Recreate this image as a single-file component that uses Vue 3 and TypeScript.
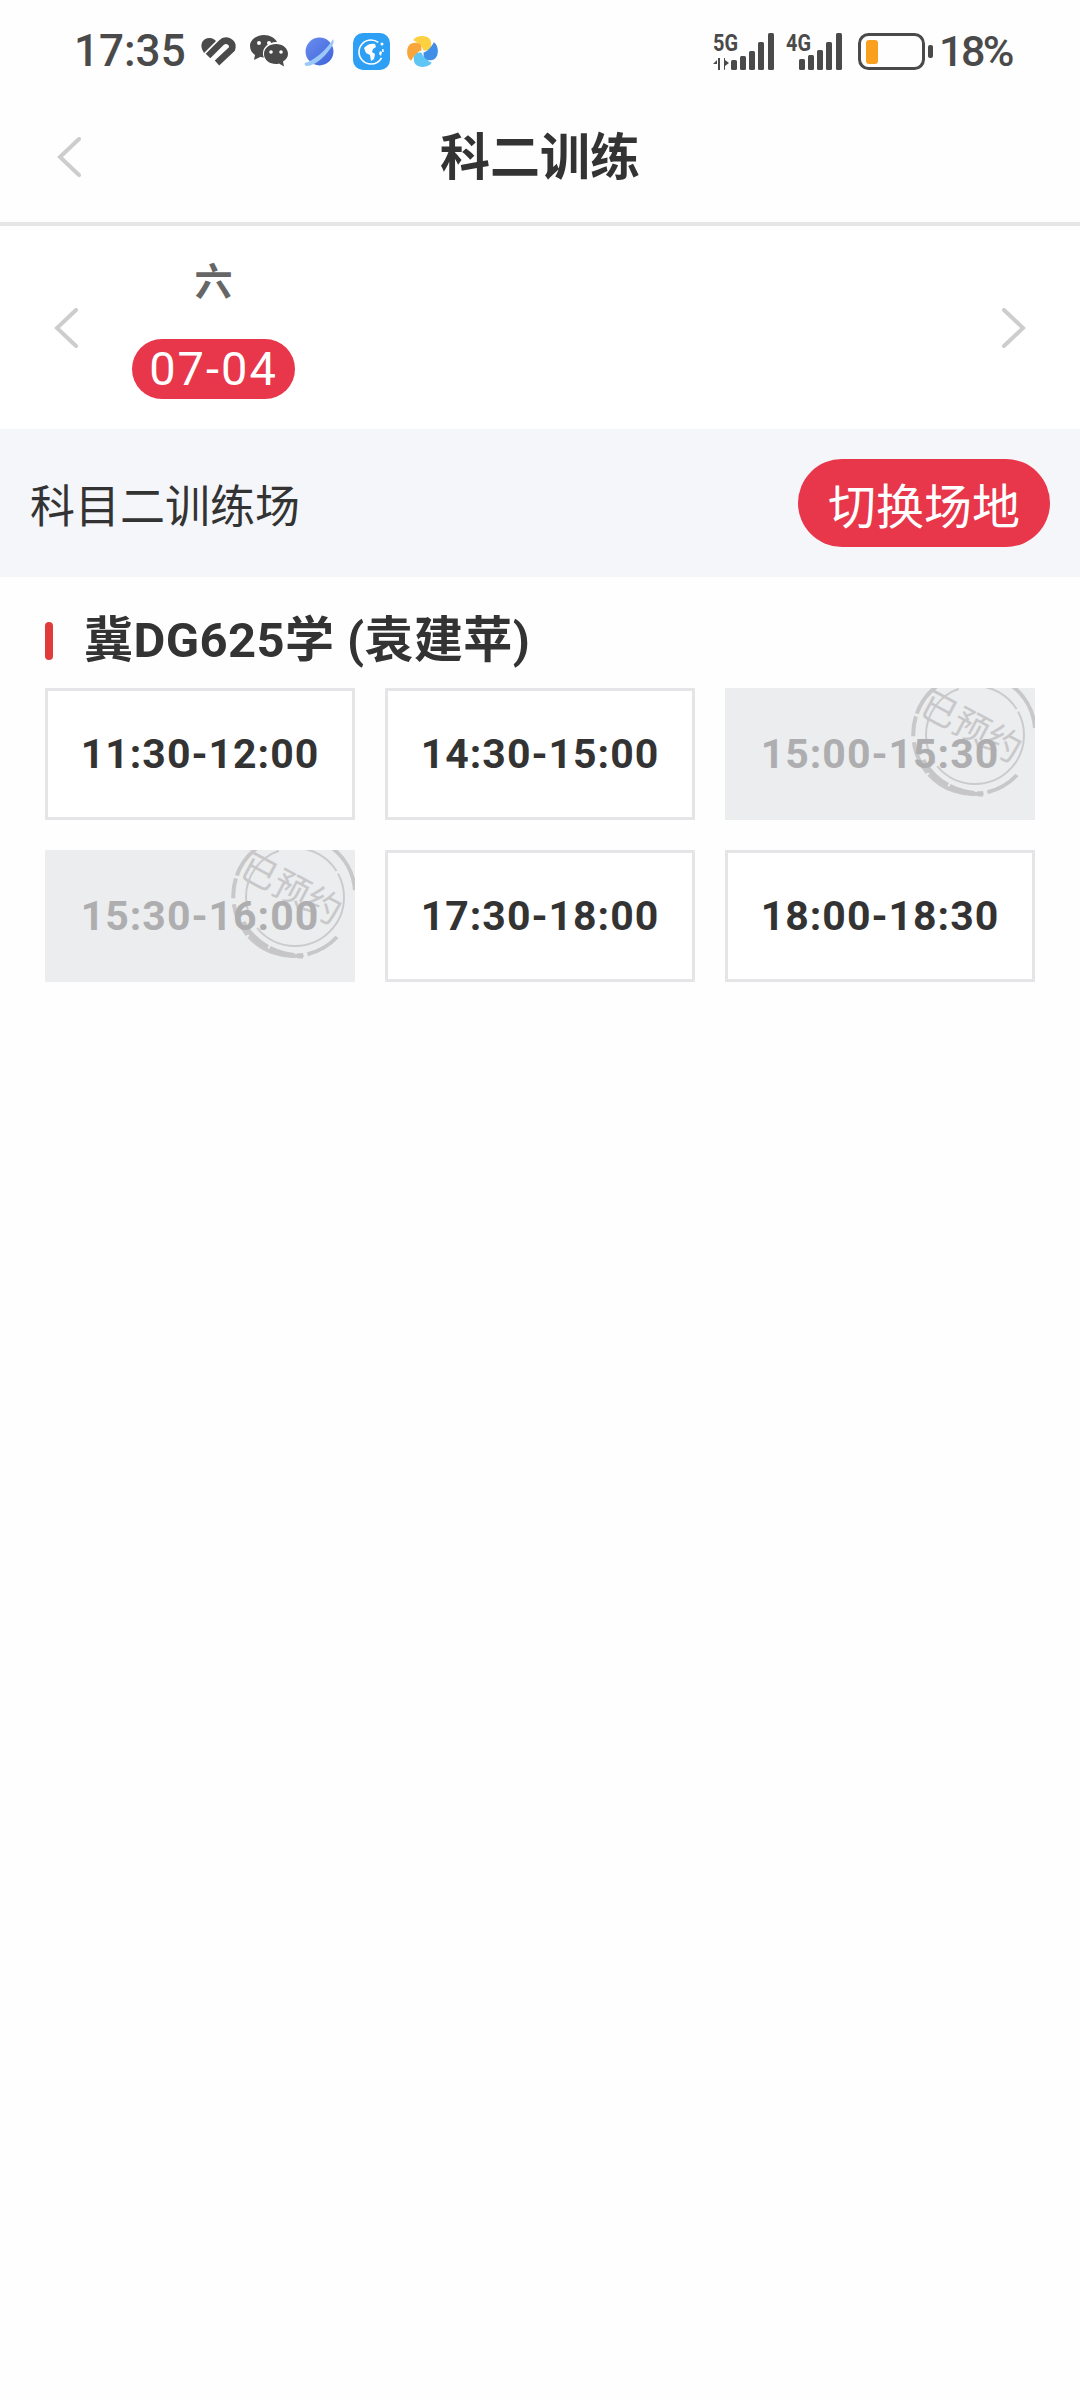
<script setup lang="ts">
interface Slot {
  time: string
  booked: boolean
}

const slots: Slot[] = [
  { time: '11:30-12:00', booked: false },
  { time: '14:30-15:00', booked: false },
  { time: '15:00-15:30', booked: true },
  { time: '15:30-16:00', booked: true },
  { time: '17:30-18:00', booked: false },
  { time: '18:00-18:30', booked: false },
]

const bladeAngles = [
  { angle: 0, color: '#fcd03f' },
  { angle: 90, color: '#3f8fe8' },
  { angle: 180, color: '#5ec5f4' },
  { angle: 270, color: '#f8a53c' },
]
</script>

<template>
  <div class="page">
    <div class="status-bar">
      <div class="status-left">
        <span class="clock">17:35</span>
        <svg class="ic-heart" viewBox="0 0 36 30">
          <path d="M3 15C-1 9 3 1 10 2c2 0 4 1 6 3L4 17z" fill="#4a4a4a" />
          <path d="M8 20L21 7c5-5 13-1 11 6L17 27" fill="none" stroke="#4a4a4a" stroke-width="6.500" />
        </svg>
        <svg class="ic-wechat" viewBox="0 0 38 32">
          <path d="M14 0C6 0 0 5 0 11c0 4 2 7 5 9l-1 5 6-3c1 0 3 .5 4 .5C13 21 13 20 13 18c0-6 6-11 13-11h1C25 3 20 0 14 0z" fill="#4a4a4a" />
          <path d="M26 9c-6.500 0-12 4-12 10s5.500 10 12 10c1 0 2 0 3-.5l5 3-1-5c3-2 5-4.500 5-7.500 0-6-5.500-10-12-10z" fill="#4a4a4a" />
          <circle cx="9" cy="8" r="2" fill="#fff" />
          <circle cx="19" cy="8" r="2" fill="#fff" />
          <circle cx="21" cy="17" r="1.800" fill="#fff" />
          <circle cx="31" cy="17" r="1.800" fill="#fff" />
        </svg>
        <svg class="ic-planet" viewBox="0 0 30 30">
          <defs>
            <linearGradient id="planetFill" x1="0" y1="0" x2="1" y2="1">
              <stop offset="0" stop-color="#6a8df0" />
              <stop offset="1" stop-color="#3f63d8" />
            </linearGradient>
          </defs>
          <circle cx="15" cy="15" r="13.500" fill="url(#planetFill)" />
          <path d="M1 26C8 25 22 14 28 3c1 2 1 3 0 5C23 18 11 29 3 29c-2 0-3-1-2-3z" fill="#9cc8f8" />
        </svg>
        <svg class="ic-globe" viewBox="0 0 37 37">
          <rect width="37" height="37" rx="10" fill="#2d9ff5" />
          <circle cx="18" cy="19" r="12" fill="none" stroke="#fff" stroke-width="1.600" stroke-dasharray="58 8" stroke-dashoffset="-6" />
          <path d="M11 15c3-4 8-5 11-4l1 3-3 2-1 3 3 2-1 5-3 2-1-6-4-2z" fill="#fff" />
          <circle cx="29" cy="11" r="1.500" fill="#fff" />
          <path d="M27 18l2 1-1 4-2-2z" fill="#fff" />
        </svg>
        <svg class="ic-wheel" viewBox="0 0 30 30">
          <path
            v-for="blade in bladeAngles"
            :key="blade.angle"
            d="M6 4C9-1 19-1 22 3c2 3 2 7 0 10-2 1-4 1-6 1C15 10 10 6 6 4z"
            :fill="blade.color"
            :transform="`rotate(${blade.angle} 15 15)`"
          />
        </svg>
      </div>
      <div class="status-right">
        <svg class="ic-signal" viewBox="0 0 63 37">
          <text x="1" y="18" class="net-label" textLength="25" lengthAdjust="spacingAndGlyphs">5G</text>
          <path d="M5 27l-4 4h4zM6 37h2V25H6zM12 25v12l1-.5V33l4-3-4-3v-2z" fill="#4a4a4a" />
          <rect x="19" y="27" width="6" height="10" rx="1.500" fill="#4a4a4a" />
          <rect x="28" y="23" width="6" height="14" rx="1.500" fill="#4a4a4a" />
          <rect x="37" y="18" width="6" height="19" rx="1.500" fill="#4a4a4a" />
          <rect x="46" y="9" width="6" height="28" rx="1.500" fill="#4a4a4a" />
          <rect x="56" y="0" width="6" height="37" rx="1.500" fill="#4a4a4a" />
        </svg>
        <svg class="ic-signal-4g" viewBox="0 0 56 37">
          <text x="0" y="18" class="net-label" textLength="25" lengthAdjust="spacingAndGlyphs">4G</text>
          <rect x="13" y="26" width="6" height="11" rx="1.500" fill="#4a4a4a" />
          <rect x="22" y="22" width="6" height="15" rx="1.500" fill="#4a4a4a" />
          <rect x="31" y="17" width="6" height="20" rx="1.500" fill="#4a4a4a" />
          <rect x="40" y="9" width="6" height="28" rx="1.500" fill="#4a4a4a" />
          <rect x="50" y="0" width="6" height="37" rx="1.500" fill="#4a4a4a" />
        </svg>
        <svg class="ic-battery" viewBox="0 0 76 37">
          <rect x="1.500" y="1.500" width="64" height="34" rx="9" fill="none" stroke="#4a4a4a" stroke-width="3" />
          <rect x="8" y="7" width="12" height="24" rx="3" fill="#f9a01e" />
          <rect x="70" y="12" width="5" height="13" rx="2" fill="#4a4a4a" />
        </svg>
        <span class="percent">18%</span>
      </div>
    </div>

    <header class="nav">
      <svg class="chevron" viewBox="0 0 24 40">
        <path d="M22 2L3 20l19 18" />
      </svg>
      <h1 class="nav-title">科二训练</h1>
    </header>

    <div class="date-row">
      <svg class="chevron" viewBox="0 0 24 40">
        <path d="M22 2L3 20l19 18" />
      </svg>
      <div class="days">
        <div class="day">
          <span class="day-name">六</span>
          <span class="day-date">07-04</span>
        </div>
      </div>
      <svg class="chevron" viewBox="0 0 24 40">
        <path d="M2 2l19 18L2 38" />
      </svg>
    </div>

    <div class="field-bar">
      <span class="field-name">科目二训练场</span>
      <button type="button" class="field-switch">切换场地</button>
    </div>

    <section class="coach">
      <h2 class="coach-title">冀DG625学 (袁建苹)</h2>
      <div class="slot-grid">
        <div
          v-for="slot in slots"
          :key="slot.time"
          class="slot"
          :class="{ 'slot--booked': slot.booked }"
        >
          <template v-if="slot.booked">
            <svg class="stamp" viewBox="0 0 124 132">
              <circle cx="64" cy="47" r="49" fill="none" stroke="#cbcbcd" stroke-width="2" stroke-dasharray="120 4 90 6 60 3" />
              <path d="M34 -7A60 60 0 1 0 106 87" fill="none" stroke="#c8c8ca" stroke-width="4" stroke-dasharray="44 3 20 6 34 2 60 4" />
              <path d="M12 72c10 20 32 34 60 34" fill="none" stroke="#c6c6c8" stroke-width="5" stroke-dasharray="36 2 26 3" />
              <path d="M100 -3A60 60 0 0 1 124 40" fill="none" stroke="#c8c8ca" stroke-width="4" />
            </svg>
            <span class="stamp-text">已预约</span>
          </template>
          <span class="slot-time">{{ slot.time }}</span>
        </div>
      </div>
    </section>
  </div>
</template>

<style scoped>
.page {
  min-height: 2400px;
  background: #fefefe;
  color: #333;
  font-family: Roboto, "Noto Sans CJK SC", sans-serif;
}

.status-bar {
  height: 38px;
  padding: 32px 68px 22px 74px;
  display: flex;
  align-items: center;
  justify-content: space-between;
  color: #4a4a4a;
}

.status-left,
.status-right {
  display: flex;
  align-items: center;
}

.clock {
  width: 126px;
  font-size: 44px;
  font-weight: 500;
  line-height: 38px;
}

.ic-heart {
  width: 36px;
  height: 30px;
  margin-right: 14px;
}

.ic-wechat {
  width: 38px;
  height: 32px;
  margin-right: 16px;
}

.ic-planet {
  width: 31px;
  height: 31px;
  margin-right: 18px;
}

.ic-globe {
  width: 37px;
  height: 37px;
  margin-right: 17px;
}

.ic-wheel {
  width: 31px;
  height: 31px;
}

.ic-signal {
  width: 63px;
  height: 37px;
  margin-right: 11px;
  overflow: visible;
}

.ic-signal-4g {
  width: 56px;
  height: 37px;
  margin-right: 16px;
  overflow: visible;
}

.ic-battery {
  width: 76px;
  height: 37px;
  margin-right: 5px;
}

.net-label {
  font-family: Roboto, sans-serif;
  font-size: 24px;
  font-weight: 700;
  fill: #4a4a4a;
}

.percent {
  font-size: 43px;
  font-weight: 500;
  letter-spacing: -2.5px;
  line-height: 38px;
}

.nav {
  height: 130px;
  padding-left: 57px;
  display: flex;
  align-items: center;
  border-bottom: 4px solid #e6e6e8;
}

.chevron {
  width: 24px;
  height: 40px;
  flex: 0 0 auto;
  fill: none;
  stroke: #cdcdcd;
  stroke-width: 4;
  stroke-linecap: round;
}

.nav-title {
  flex: 1;
  margin: 2px 81px 0 0;
  text-align: center;
  font-size: 50px;
  font-weight: 700;
  line-height: 60px;
  color: #333;
}

.date-row {
  height: 203px;
  padding: 0 54px;
  display: flex;
  align-items: center;
  background: #fff;
}

.days {
  flex: 1;
  padding-left: 54px;
}

.day {
  width: 163px;
  display: flex;
  flex-direction: column;
  align-items: center;
  gap: 40px;
  padding-top: 8px;
}

.day-name {
  font-size: 38px;
  font-weight: 700;
  line-height: 34px;
  color: #666;
}

.day-date {
  width: 163px;
  height: 60px;
  border-radius: 30px;
  background: #e8364a;
  color: #fff;
  font-size: 47px;
  letter-spacing: 2px;
  line-height: 60px;
  text-align: center;
}

.field-bar {
  height: 148px;
  padding: 0 30px;
  display: flex;
  align-items: center;
  justify-content: space-between;
  background: #f5f6fa;
}

.field-name {
  font-size: 45px;
  color: #333;
}

.field-switch {
  width: 252px;
  height: 88px;
  padding: 0;
  border: 0;
  border-radius: 44px;
  background: #e8364a;
  color: #fff;
  font-family: inherit;
  font-size: 48px;
}

.coach {
  padding: 36px 45px 0;
}

.coach-title {
  position: relative;
  margin: 0 0 19px;
  padding-left: 39px;
  font-size: 49px;
  font-weight: 700;
  letter-spacing: 0.4px;
  line-height: 56px;
  color: #333;
}

.coach-title::before {
  content: "";
  position: absolute;
  left: 0;
  top: 9px;
  width: 8px;
  height: 38px;
  border-radius: 4px;
  background: #e03a3a;
}

.slot-grid {
  display: grid;
  grid-template-columns: repeat(3, 310px);
  grid-auto-rows: 132px;
  gap: 30px;
}

.slot {
  position: relative;
  display: flex;
  align-items: center;
  justify-content: center;
  box-sizing: border-box;
  border: 3px solid #e5e5e7;
  background: #fff;
}

.slot-time {
  position: relative;
  font-size: 41px;
  font-weight: 700;
  letter-spacing: 1px;
  color: #333;
}

.slot--booked {
  border: 0;
  background: #ecedef;
}

.slot--booked .slot-time {
  color: #aeaeb0;
}

.stamp {
  position: absolute;
  top: 0;
  right: 0;
  width: 124px;
  height: 132px;
}

.stamp-text {
  position: absolute;
  top: 16px;
  left: 192px;
  width: 112px;
  font-family: "Noto Sans CJK SC", sans-serif;
  font-size: 36px;
  line-height: 40px;
  text-align: center;
  white-space: nowrap;
  color: #c8c8ca;
  transform: rotate(28deg);
}
</style>
